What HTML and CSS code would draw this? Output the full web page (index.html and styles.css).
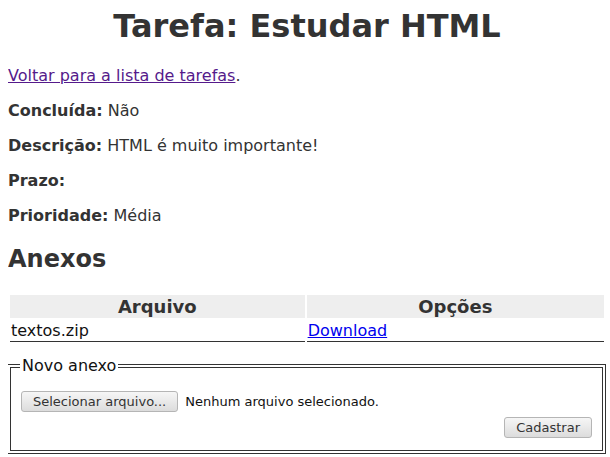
FILE: index.html
```html
<!DOCTYPE html>
<html lang="pt-BR">

<head>
    <meta charset="UTF-8">
    <meta name="viewport" content="width=device-width, initial-scale=1.0">
    <title>Tarefa: Estudar HTML</title>
    <link rel="stylesheet" href="styles.css">
</head>

<body>
    <h1>Tarefa: Estudar HTML</h1>

    <p><a href="#" class="visited">Voltar para a lista de tarefas</a>.</p>

    <p><strong>Concluída:</strong> Não</p>
    <p><strong>Descrição:</strong> HTML é muito importante!</p>
    <p><strong>Prazo:</strong> </p>
    <p><strong>Prioridade:</strong> Média</p>

    <h2>Anexos</h2>

    <table class="anexos">
        <tr>
            <th>Arquivo</th>
            <th>Opções</th>
        </tr>
        <tr>
            <td>textos.zip</td>
            <td><a href="#">Download</a></td>
        </tr>
    </table>

    <form>
        <fieldset>
            <legend>Novo anexo</legend>
            <div class="arquivo">
                <button type="button" class="btn">Selecionar arquivo...</button>
                <span>Nenhum arquivo selecionado.</span>
            </div>
            <div class="enviar">
                <button type="submit" class="btn">Cadastrar</button>
            </div>
        </fieldset>
    </form>
</body>

</html>
```

FILE: styles.css
```css
body {
    margin: 7px 4px 8px 8px;
    font-family: "DejaVu Sans", sans-serif;
    font-size: 16px;
    color: #111;
}

h1 {
    margin: 0 0 21px;
    font-size: 32px;
    text-align: center;
    color: #333;
}

h2 {
    font-size: 24px;
    color: #333;
    margin: 20px 0;
}

p {
    color: #333;
    margin: 16px 0;
}

a {
    color: #0000ee;
}

a.visited {
    color: #551a8b;
}

.anexos {
    width: 100%;
    border-spacing: 2px;
}

.anexos th {
    background-color: #eee;
    color: #333;
    font-size: 18px;
    padding: 1px;
}

.anexos td {
    text-align: left;
    padding: 1px;
    border-bottom: 1px solid #333;
}

form {
    margin-top: 12px;
}

fieldset {
    margin: 0 0 0 -1px;
    padding: 16px 10px 12px;
    border: 4px double #333;
}

legend {
    padding: 0 2px;
    margin-left: -1px;
}

.arquivo {
    display: flex;
    align-items: center;
    gap: 7px;
    font-size: 13px;
}

.enviar {
    display: flex;
    justify-content: flex-end;
    margin-top: 5px;
}

.btn {
    font-family: "DejaVu Sans", sans-serif;
    font-size: 13px;
    color: #333;
    height: 21px;
    padding: 0 11px;
    border: 1px solid #b5b5b5;
    border-radius: 3px;
    background: linear-gradient(#f6f6f6, #dcdcdc);
}
```
